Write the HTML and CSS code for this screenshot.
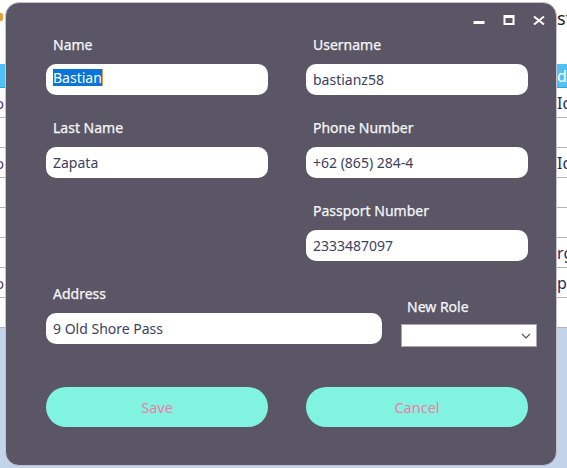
FILE: index.html
```html
<!DOCTYPE html>
<html lang="en">
<head>
<meta charset="utf-8">
<title>Edit User</title>
<link rel="stylesheet" href="styles.css">
</head>
<body>
  <div class="app">
    <header class="app-top">
      <span class="app-mark"></span>
      <span class="app-title">st</span>
    </header>
    <div class="grid">
      <div class="grid-head"><span class="cell-l"></span><span class="cell-r">dr</span></div>
      <div class="grid-row"><span class="cell-l">o</span><span class="cell-r">Id</span></div>
      <div class="grid-row"><span class="cell-l"></span><span class="cell-r"></span></div>
      <div class="grid-row"><span class="cell-l">o</span><span class="cell-r">Id</span></div>
      <div class="grid-row"><span class="cell-l"></span><span class="cell-r"></span></div>
      <div class="grid-row"><span class="cell-l"></span><span class="cell-r"></span></div>
      <div class="grid-row"><span class="cell-l"></span><span class="cell-r">rg</span></div>
      <div class="grid-row"><span class="cell-l">o</span><span class="cell-r">pe</span></div>
      <div class="grid-row"><span class="cell-l"></span><span class="cell-r"></span></div>
    </div>
    <div class="app-foot"></div>
  </div>

  <div class="dialog">
    <div class="titlebar">
      <button class="win-btn" aria-label="Minimize">
        <svg width="12" height="12" viewBox="0 0 12 12"><rect x="0.5" y="8" width="11" height="3" fill="#fff"/></svg>
      </button>
      <button class="win-btn" aria-label="Maximize">
        <svg width="12" height="12" viewBox="0 0 12 12"><path d="M0.5 2h11v10h-11z M2.5 5v5h7v-5z" fill="#fff" fill-rule="evenodd"/></svg>
      </button>
      <button class="win-btn" aria-label="Close">
        <svg width="12" height="12" viewBox="0 0 12 12"><path d="M1 3.5l10 8M11 3.5l-10 8" stroke="#fff" stroke-width="2" fill="none"/></svg>
      </button>
    </div>

    <div class="form">
      <div class="field">
        <label class="label">Name</label>
        <div class="input"><span class="selected">Bastian</span></div>
      </div>
      <div class="field">
        <label class="label">Username</label>
        <div class="input">bastianz58</div>
      </div>
      <div class="field">
        <label class="label">Last Name</label>
        <div class="input">Zapata</div>
      </div>
      <div class="field">
        <label class="label">Phone Number</label>
        <div class="input">+62 (865) 284-4</div>
      </div>
      <div class="field field-right">
        <label class="label">Passport Number</label>
        <div class="input">2333487097</div>
      </div>
      <div class="address-row">
        <div class="field field-address">
          <label class="label">Address</label>
          <div class="input">9 Old Shore Pass</div>
        </div>
        <div class="field field-role">
          <label class="label label-role">New Role</label>
          <div class="select">
            <svg width="10" height="6" viewBox="0 0 10 6"><path d="M1 1l4 4 4-4" stroke="#555" stroke-width="1.2" fill="none"/></svg>
          </div>
        </div>
      </div>
      <div class="actions">
        <button class="btn">Save</button>
        <button class="btn">Cancel</button>
      </div>
    </div>
  </div>
</body>
</html>
```

FILE: styles.css
```css
* { box-sizing: border-box; }

html, body {
  margin: 0;
  padding: 0;
}

body {
  width: 567px;
  height: 468px;
  overflow: hidden;
  position: relative;
  font-family: "Noto Sans", "Open Sans", sans-serif;
  background: #ffffff;
}

/* background application */
.app {
  display: flex;
  flex-direction: column;
  height: 468px;
}

.app-top {
  height: 64px;
  display: flex;
  align-items: flex-start;
  justify-content: space-between;
  padding-top: 6px;
}

.app-mark {
  width: 3px;
  height: 8px;
  margin-top: 7px;
  background: #e8a030;
  border-radius: 0 2px 2px 0;
}

.app-title {
  width: 10px;
  overflow: hidden;
  font-size: 18px;
  line-height: 24px;
  color: #222;
  white-space: nowrap;
}

.grid-head {
  height: 24px;
  background: #4fc1f2;
  border-bottom: 1px solid #3aa3d4;
  display: flex;
  align-items: center;
  color: #fff;
}

.grid-row {
  height: 30px;
  border-bottom: 1px solid #b4b4b4;
  display: flex;
  align-items: center;
  color: #1f2d56;
}

.grid-row:first-of-type { height: 27px; }

.cell-l {
  width: 4px;
  overflow: hidden;
  direction: rtl;
  font-size: 15px;
  color: #5a3a7a;
  white-space: nowrap;
}

.cell-r {
  margin-left: auto;
  width: 10px;
  overflow: hidden;
  font-size: 16px;
  white-space: nowrap;
}

.app-foot {
  flex: 1;
  background: #c3d3ea;
}

/* dialog window */
.dialog {
  position: absolute;
  left: 5px;
  top: 2px;
  width: 552px;
  height: 464px;
  background: #5a5666;
  border: 1px solid #c4c3cb;
  border-radius: 14px;
}

.titlebar {
  height: 32px;
  display: flex;
  justify-content: flex-end;
  align-items: center;
  padding-right: 2px;
}

.win-btn {
  width: 30px;
  height: 20px;
  padding: 0;
  border: 0;
  background: transparent;
  display: flex;
  align-items: center;
  justify-content: center;
}

.form {
  display: grid;
  grid-template-columns: 222px 222px;
  column-gap: 38px;
  row-gap: 23px;
  padding-left: 40px;
}

.field {
  display: flex;
  flex-direction: column;
}

.field-right { grid-column: 2; }

.label {
  font-size: 14px;
  line-height: 19px;
  color: #f6f6f8;
  padding-left: 7px;
  margin-bottom: 10px;
  -webkit-text-stroke: 0.25px #f6f6f8;
}

.input {
  height: 31px;
  background: #fff;
  border-radius: 10px;
  padding-left: 7px;
  font-size: 14px;
  line-height: 31px;
  color: #3d3f5e;
  white-space: nowrap;
}

.selected {
  display: inline-block;
  height: 17px;
  line-height: 17px;
  vertical-align: 2px;
  background: #0a74da;
  color: #fff;
  border-right: 1px solid #e89a4a;
}

.address-row {
  grid-column: 1 / -1;
  display: flex;
  align-items: flex-start;
}

.field-address {
  width: 336px;
  flex-shrink: 0;
}

.field-role {
  width: 136px;
  flex-shrink: 0;
  margin-left: 19px;
  margin-top: 13px;
}

.label-role {
  padding-left: 6px;
  margin-bottom: 8px;
}

.select {
  height: 23px;
  background: #fff;
  border: 1px solid #a8a8ae;
  display: flex;
  align-items: center;
  justify-content: flex-end;
  padding-right: 5px;
}

.actions {
  grid-column: 1 / -1;
  display: grid;
  grid-template-columns: 222px 222px;
  column-gap: 38px;
  margin-top: 17px;
}

.btn {
  height: 40px;
  border: 0;
  border-radius: 20px;
  background: #80f4e0;
  color: #f27aa9;
  font-family: "Noto Sans", "Open Sans", sans-serif;
  font-size: 14.5px;
  padding: 0;
}
```
